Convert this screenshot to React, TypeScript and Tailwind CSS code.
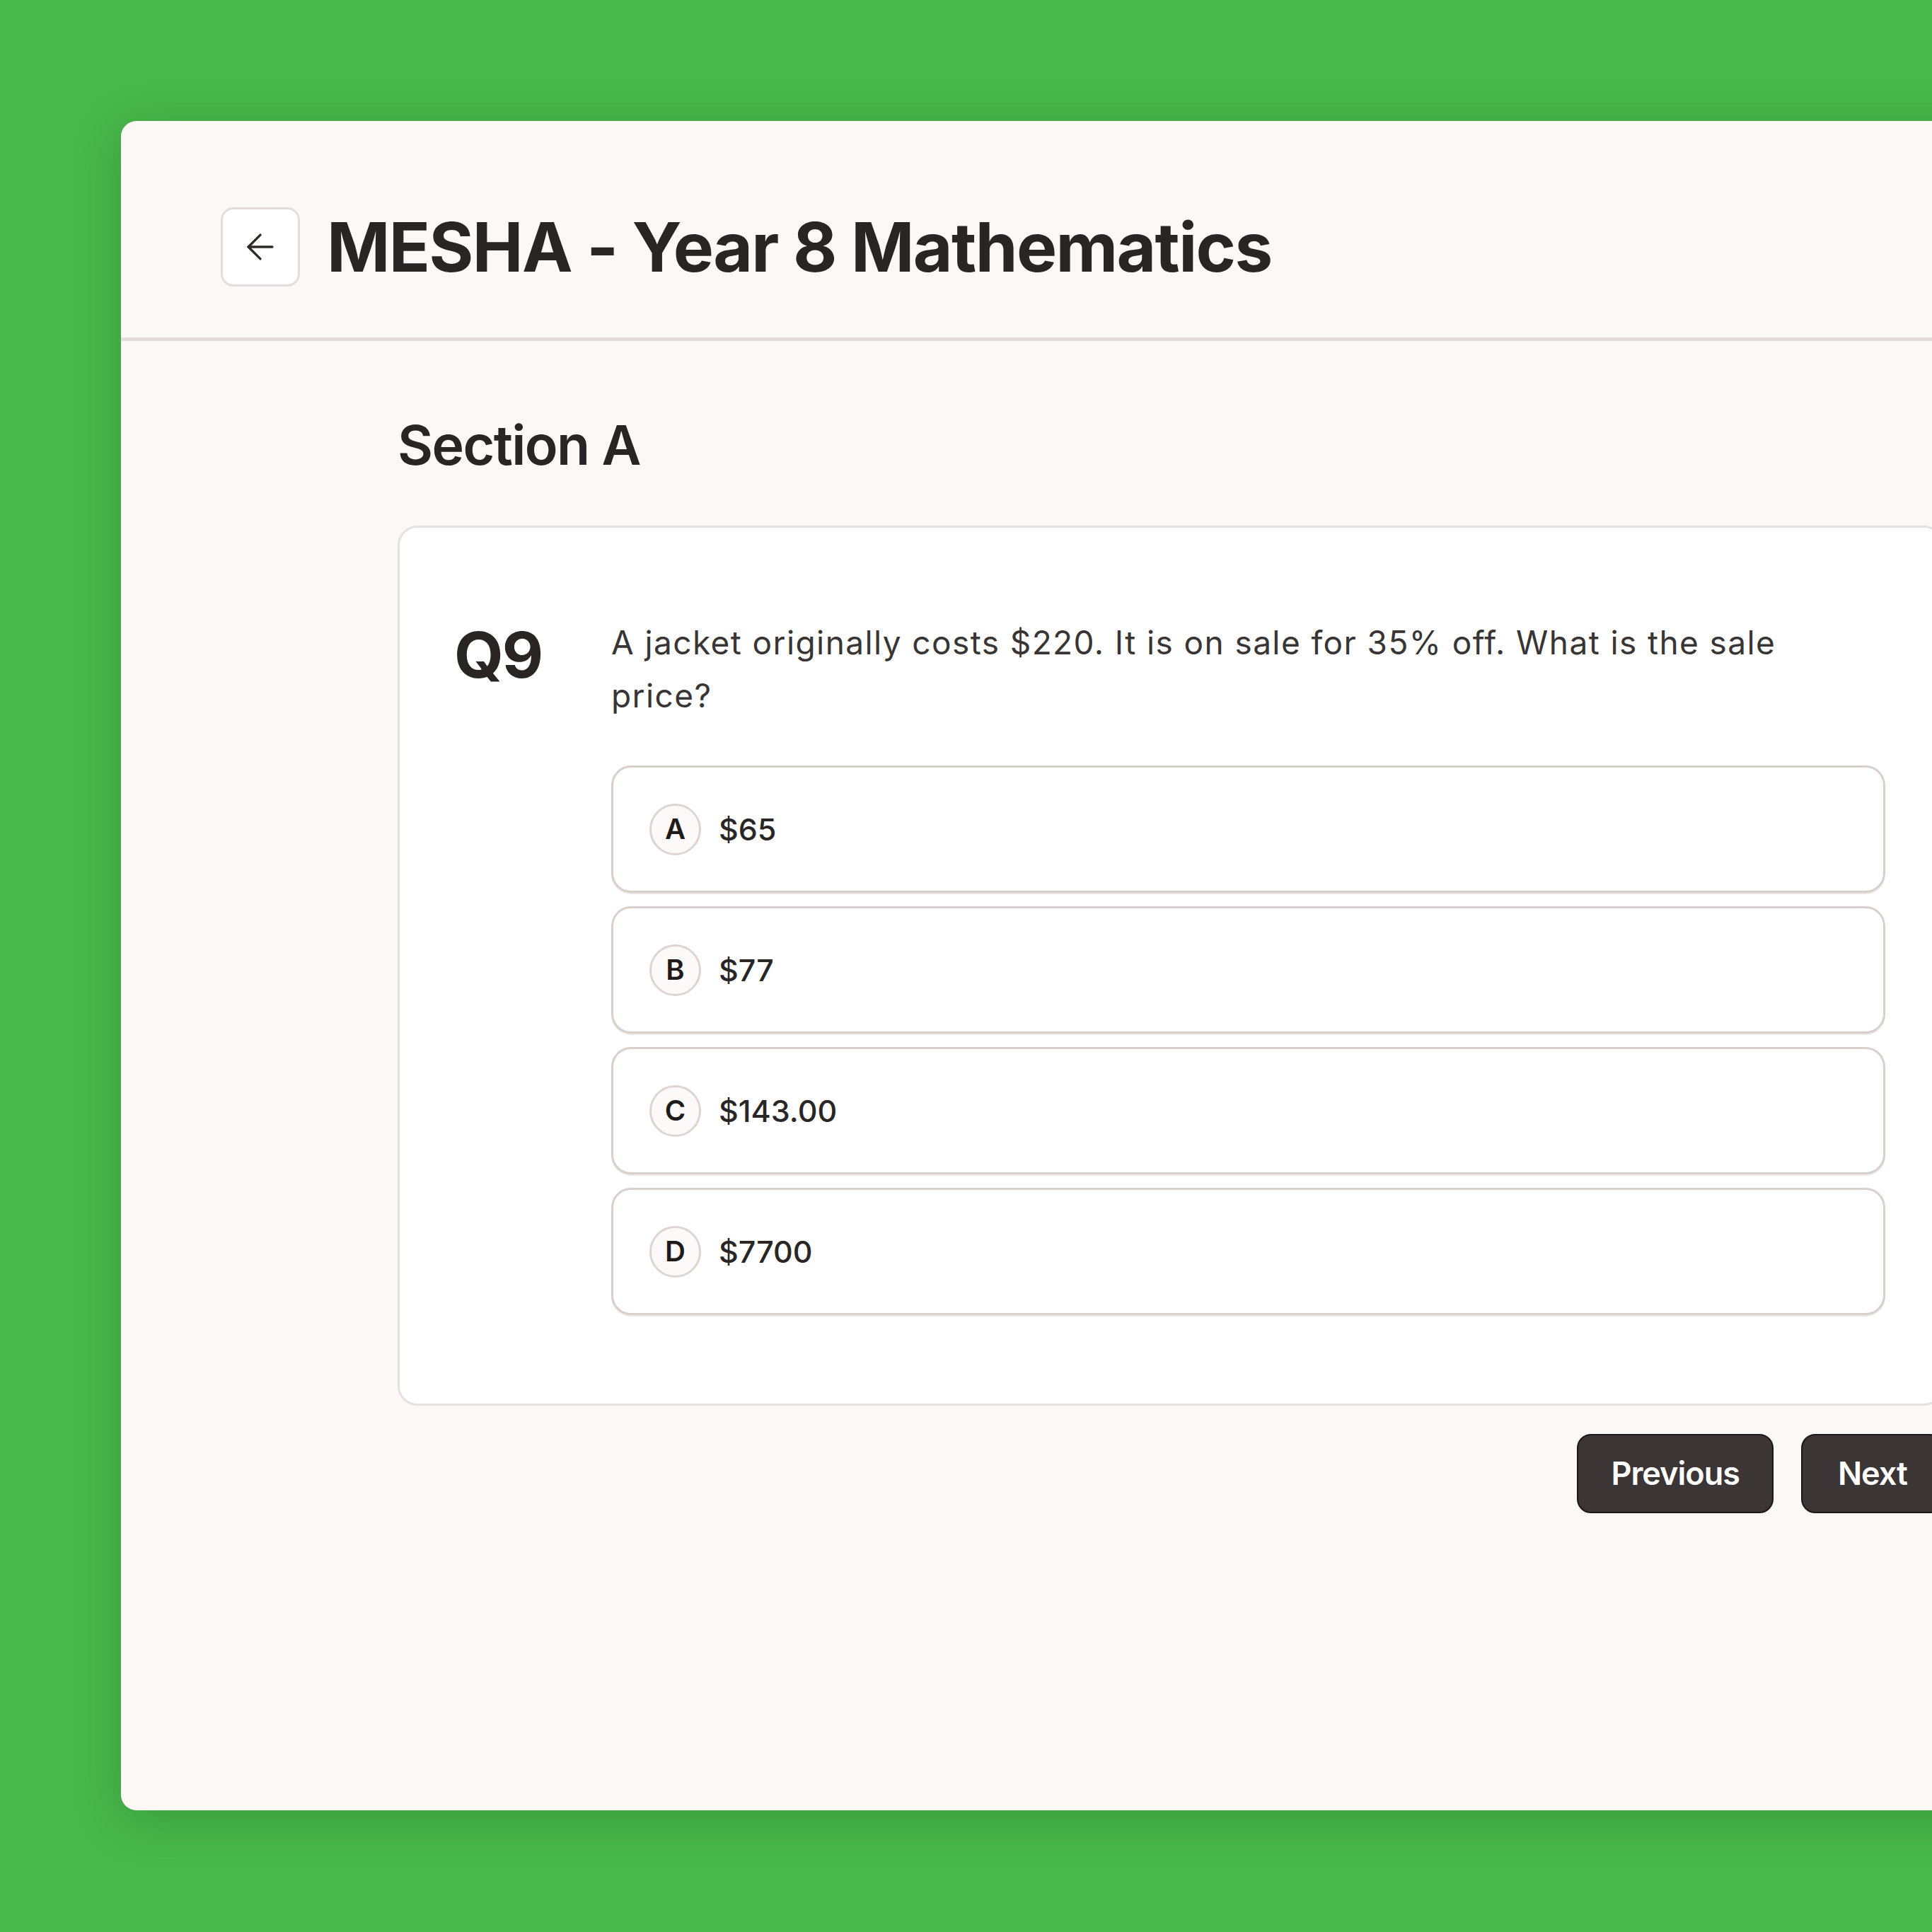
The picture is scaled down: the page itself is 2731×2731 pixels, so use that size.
import { ArrowLeft } from "lucide-react";

const options = [
  { key: "A", label: "$65" },
  { key: "B", label: "$77" },
  { key: "C", label: "$143.00" },
  { key: "D", label: "$7700" },
];

function Option({ letter, label }: { letter: string; label: string }) {
  return (
    <button className="flex h-[180px] w-full items-center gap-[25px] rounded-[28px] border-[3px] border-[#d8d0cd] bg-white pl-[51px] text-left shadow-[0_2px_0_#ece7e5]">
      <span className="flex size-[73px] shrink-0 items-center justify-center rounded-full border-[3px] border-[#ddd5d2] bg-[#fdf9f8] text-[40px] font-semibold text-[#1f1b1b]">
        {letter}
      </span>
      <span className="text-[43px] font-medium text-[#2a2626]">{label}</span>
    </button>
  );
}

export default function App() {
  return (
    <div className="h-[2731px] w-[2731px] overflow-hidden bg-[#48b94b] pl-[171px] pt-[171px] font-['Inter',sans-serif]">
      <div className="flex h-[2388px] w-[2990px] flex-col rounded-[22px] bg-[#fcf8f6] shadow-[0_12px_70px_rgba(0,40,0,0.22)]">
        {/* Header */}
        <header className="flex items-center gap-[38px] border-b-[5px] border-[#e3dddb] pb-[72px] pl-[141px] pt-[122px]">
          <button
            aria-label="Back"
            className="flex size-[112px] items-center justify-center rounded-[18px] border-[3px] border-[#e3dedc] bg-white text-[#2f2a2a]"
          >
            <ArrowLeft size={58} strokeWidth={1.4} />
          </button>
          <h1 className="text-[96px] font-bold leading-none tracking-[-1.6px] text-[#2a2525]">
            MESHA - Year 8 Mathematics
          </h1>
        </header>

        {/* Question */}
        <main className="pl-[391px] pt-[101px]">
          <div className="w-[2186px]">
            <h2 className="text-[77px] font-semibold leading-[93px] tracking-[-1.6px] text-[#2a2525]">
              Section A
            </h2>

            <div className="mt-[67px] flex rounded-[28px] border-[3px] border-[#e6e1df] bg-white pb-[125px] pl-[77px] pr-[80px] pt-[125px]">
              <div className="w-[222px] shrink-0 text-[90px] font-bold leading-[109px] tracking-tight text-[#2a2525]">
                Q9
              </div>
              <div className="flex-1">
                <p className="max-w-[1720px] text-[46px] leading-[75px] tracking-[1.4px] text-[#3a3535]">
                  A jacket originally costs $220. It is on sale for 35% off. What is the sale price?
                </p>
                <div className="mt-[61px] flex flex-col gap-[19px]">
                  {options.map((o) => (
                    <Option key={o.key} letter={o.key} label={o.label} />
                  ))}
                </div>
              </div>
            </div>

            <div className="mt-[40px] flex justify-end gap-[39px]">
              <button className="h-[112px] rounded-[20px] border-2 border-[#1c1818] bg-[#3b3535] px-[46px] text-[45px] font-semibold tracking-[-1px] text-white">
                Previous
              </button>
              <button className="h-[112px] rounded-[20px] border-2 border-[#1c1818] bg-[#3b3535] px-[50px] text-[45px] font-semibold tracking-[-1px] text-white">
                Next
              </button>
            </div>
          </div>
        </main>
      </div>
    </div>
  );
}
